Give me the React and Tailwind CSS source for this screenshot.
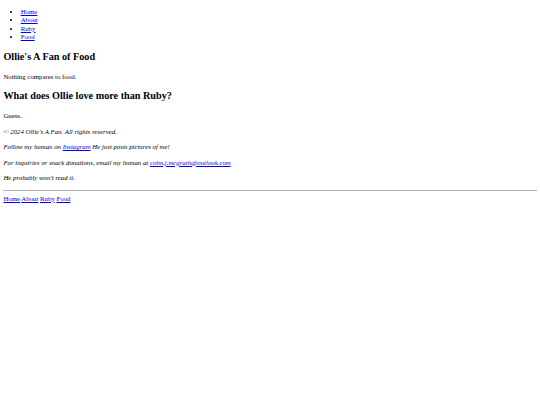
export default function App() {
  const links = ['Home', 'About', 'Ruby', 'Food'];

  return (
    <div className="px-[3.4px] font-['Liberation_Serif',serif] text-[6.8px] leading-[8.33px] text-black">
      <nav>
        <ul className="m-0 list-disc pt-[8px] pl-[17.3px]">
          {links.map((l) => (
            <li key={l}>
              <a href="#" className="text-[#0000ee] underline">{l}</a>
            </li>
          ))}
        </ul>
      </nav>

      <section>
        <h2 className="mt-[9.4px] text-[10.2px] leading-[12.5px] font-bold">Ollie's A Fan of Food</h2>
        <p className="mt-[9.4px]">Nothing compares to food.</p>
      </section>

      <section>
        <h2 className="mt-[9.4px] text-[10.2px] leading-[12.5px] font-bold">What does Ollie love more than Ruby?</h2>
        <p className="mt-[9.4px]">Guess.</p>
      </section>

      <footer className="italic">
        <p className="mt-[7.2px]">© 2024 Ollie's A Fan. All rights reserved.</p>
        <p className="mt-[7.2px]">
          Follow my human on <a href="#" className="text-[#0000ee] underline">Instagram</a> He just posts pictures of me!
        </p>
        <p className="mt-[7.2px]">
          For inquiries or snack donations, email my human at{' '}
          <a href="#" className="text-[#0000ee] underline">colm.j.mcgrath@outlook.com</a>
        </p>
        <p className="mt-[7.2px]">He probably won't read it.</p>
      </footer>

      <hr className="mt-[7.2px] mb-[4px] border-t border-[#b4b4b4]" />

      <div>
        {links.map((l, i) => (
          <span key={l}>
            <a href="#" className="text-[#0000ee] underline">{l}</a>
            {i < links.length - 1 ? ' ' : ''}
          </span>
        ))}
      </div>
    </div>
  );
}
